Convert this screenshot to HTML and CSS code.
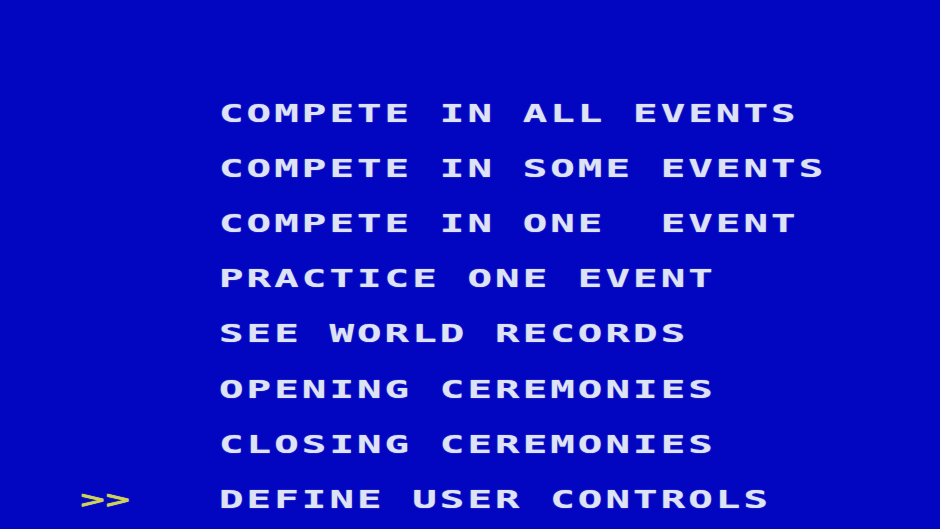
FILE: index.html
```html
<!DOCTYPE html>
<html lang="en">
<head>
<meta charset="utf-8">
<title>Main Menu</title>
<link rel="stylesheet" href="styles.css">
</head>
<body>
  <main class="screen">
    <ul class="menu">
      <li class="item"><span class="cursor"></span><span class="label">COMPETE IN ALL EVENTS</span></li>
      <li class="item"><span class="cursor"></span><span class="label">COMPETE IN SOME EVENTS</span></li>
      <li class="item"><span class="cursor"></span><span class="label">COMPETE IN ONE  EVENT</span></li>
      <li class="item"><span class="cursor"></span><span class="label">PRACTICE ONE EVENT</span></li>
      <li class="item"><span class="cursor"></span><span class="label">SEE WORLD RECORDS</span></li>
      <li class="item"><span class="cursor"></span><span class="label">OPENING CEREMONIES</span></li>
      <li class="item"><span class="cursor"></span><span class="label">CLOSING CEREMONIES</span></li>
      <li class="item is-selected"><span class="cursor">&gt;&gt;</span><span class="label">DEFINE USER CONTROLS</span></li>
    </ul>
  </main>
</body>
</html>
```

FILE: styles.css
```css
html, body {
  margin: 0;
  padding: 0;
  height: 100%;
  background: #0306c0;
}

.screen {
  width: 940px;
  height: 529px;
  overflow: hidden;
  background: #0306c0;
  box-sizing: border-box;
  padding: 86px 0 0 80px;
}

.menu {
  list-style: none;
  margin: 0;
  padding: 0;
  display: flex;
  flex-direction: column;
}

.item {
  display: grid;
  grid-template-columns: 139px 1fr;
  height: 55.1px;
  align-items: center;
}

/* blocky 8-bit style lettering: a bold mono face widened horizontally */
.cursor,
.label {
  font-family: "DejaVu Sans Mono", "Liberation Mono", monospace;
  font-weight: bold;
  font-size: 25.5px;
  line-height: 55px;
  letter-spacing: 1.9px;
  white-space: pre;
  transform: scaleX(1.6);
  transform-origin: 0 50%;
  display: block;
  text-shadow: 0 0 1px rgba(221, 226, 244, 0.6);
}

.label {
  color: #dde2f4;
}

.cursor {
  color: #cfd25a;
  letter-spacing: 0.4px;
  text-shadow: 0 0 1px rgba(207, 210, 90, 0.6), 0.5px 0 0 rgba(207, 210, 90, 0.8);
}
```
